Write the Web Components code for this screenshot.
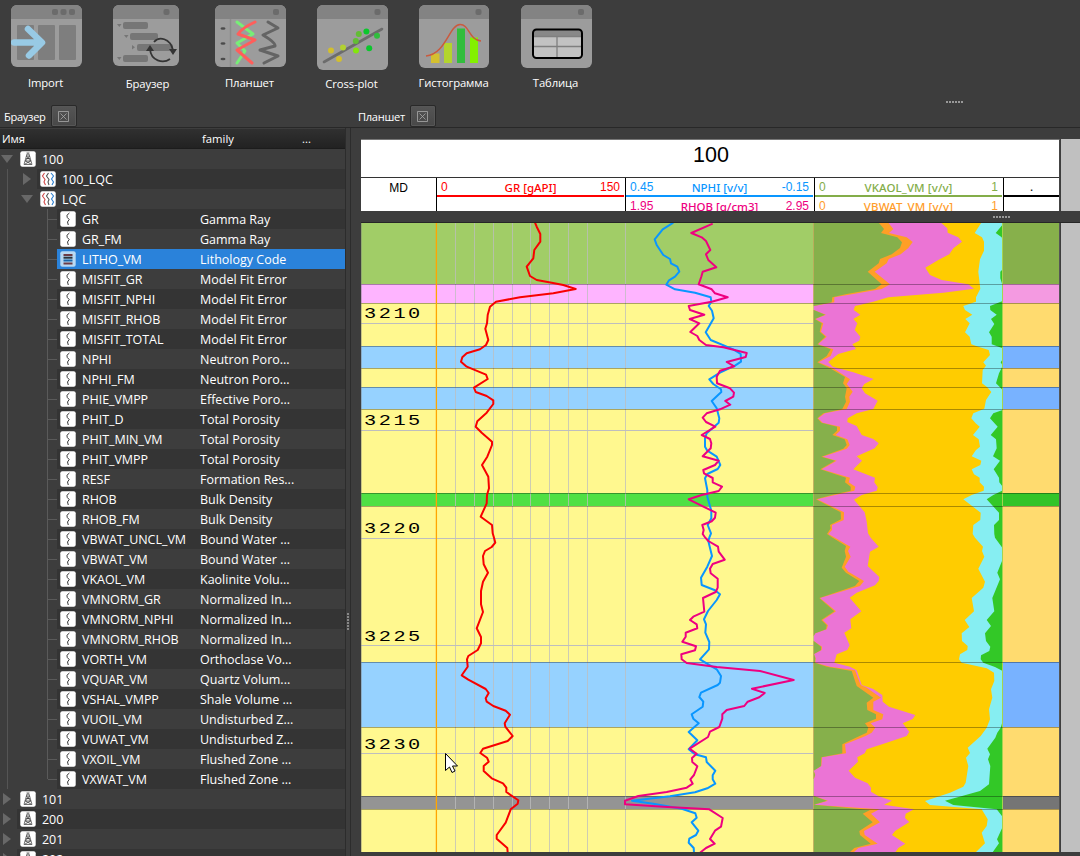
<!DOCTYPE html>
<html lang="ru">
<head>
<meta charset="utf-8">
<title>Планшет</title>
<style>
html,body{margin:0;height:100%;overflow:hidden;background:#3d3d3d}
body{font-family:"Open Sans","Noto Sans",sans-serif;font-size:12px;color:#fff}
</style>
</head>
<body>
<well-app></well-app>
<script>
const define=(name,css,html)=>customElements.define(name,class extends HTMLElement{
  connectedCallback(){
    if(this.shadowRoot)return;
    this.attachShadow({mode:'open'}).innerHTML='<style>'+css+'</style>'+(typeof html==='function'?html(this):html);
  }
});

/* ---------- toolbar ---------- */
const frame=(w,h,dots)=>`<rect width="${w}" height="${h}" rx="6" fill="#9c9c9c"/><path d="M0 14V6a6 6 0 0 1 6-6H${w-6}a6 6 0 0 1 6 6V14z" fill="#838383"/>${dots.map(x=>`<rect x="${x}" y="4" width="6" height="6" rx="2" fill="#6b6b6b"/>`).join('')}`;
const icons={
import:[71,62,frame(71,62,[41,49.5,58])+`<g fill="#7e7e7e"><rect x="6" y="20" width="17" height="35" rx="1"/><rect x="27" y="20" width="17" height="35" rx="1"/><rect x="48" y="20" width="17" height="35" rx="1"/></g><path d="M3 37.5H30M17 24L31 37.5L18 50.500" fill="none" stroke="#98cae5" stroke-width="6.500" stroke-linecap="round" stroke-linejoin="round"/>`],
browser:[66,61,frame(66,61,[50.5])+`<g fill="#767676"><rect x="10" y="17" width="25" height="7" rx="2"/><rect x="17" y="28" width="28" height="7" rx="2"/><rect x="24" y="39" width="36" height="7" rx="2"/><rect x="10" y="50" width="25" height="7" rx="2"/><path d="M4 19h4.500l-2.200 3zM11 30h4.500l-2.200 3zM19 40v4.500l3-2.200zM4 52h4.500l-2.200 3z"/></g><g fill="none" stroke="#343434" stroke-width="1.800"><path d="M41 37C46 31 57 33 60 45M57 54C50 59 38 56 37 44"/></g><path d="M56 44h8l-4 6zM33 46h8l-4-6z" fill="#343434"/>`],
planshet:[71,62,frame(71,62,[58])+`<path d="M15.500 14V62" stroke="#8c8c8c" stroke-width="1.500"/><g fill="#4b4b4b"><ellipse cx="8" cy="23.500" rx="2.500" ry="1.300"/><ellipse cx="8" cy="38.500" rx="2.500" ry="1.300"/><ellipse cx="8" cy="54" rx="2.500" ry="1.300"/></g><g fill="none" stroke-width="3" stroke-linecap="round" stroke-linejoin="round"><path stroke="#77ee77" d="M22 17L38 29L22 38L30 46L22 58"/><path stroke="#ff5e5b" d="M40 17Q27 23 23 29L40 35L22 45L37 58"/><path stroke="#646464" d="M53 17L63 23L48 30Q61 38 60 41L45 45L63 51L49 58"/></g>`],
cross:[71,65,frame(71,65,[57.500])+`<path d="M7 57L65 24" stroke="#6c6c6c" stroke-width="2.600" stroke-linecap="round"/>${[[14,45.500,'#d2bf2e'],[22,54,'#d2bf2e'],[26,42.500,'#b2d130'],[38.800,36,'#62bd35'],[39,45.500,'#83e60c'],[41.800,29,'#62bd35'],[49.400,26.500,'#0bc72c'],[60,30.700,'#31bd3d'],[52.200,43.300,'#0bc72c']].map(d=>`<circle cx="${d[0]}" cy="${d[1]}" r="3" fill="${d[2]}"/>`).join('')}`],
hist:[70,63,frame(70,63,[56.500])+`<rect x="12" y="48.500" width="8.500" height="9.500" fill="#d4c02e"/><rect x="25" y="38" width="8" height="20" fill="#b3d42d"/><rect x="38" y="23.500" width="8" height="34.500" fill="#31bd3d"/><rect x="51" y="32.500" width="8" height="25.500" fill="#83f000"/><path d="M7 51C27 49 30 20 41 19.500C50 19 50 35 62 36" fill="none" stroke="#ca5a3e" stroke-width="1.500"/>`],
table:[71,63,frame(71,63,[57])+`<path d="M12 25h48v6H12z" fill="#888"/><path d="M12 31.500h48V53H12z" fill="#c2c2c2"/><path d="M12 31.500h48M12 41.500h48M36 31.500V53" stroke="#7f7f7f" stroke-width="1.300"/><rect x="12" y="24.500" width="49" height="28.500" rx="3.500" fill="none" stroke="#000" stroke-width="2"/>`]
};
define('tool-button',`:host{display:flex;flex-direction:column;align-items:center;width:102px;height:90px;flex:none}
.i{height:70px;display:flex;align-items:flex-start}svg{display:block}
:host([icon=browser]) svg{margin-right:4px}
:host([icon=browser]) .i,:host([icon=cross]) .i{height:71px}
span{font-size:11.300px;line-height:16px;white-space:nowrap;letter-spacing:-.12px;margin-right:1px}`,
e=>{const [w,h,s]=icons[e.getAttribute('icon')];return `<div class="i"><svg width="${w}" height="${h}" viewBox="0 0 ${w} ${h}">${s}</svg></div><span><slot></slot></span>`});

/* ---------- dock title ---------- */
define('dock-title',`:host{display:flex;align-items:center;height:24px;box-sizing:border-box;gap:5px;font-size:11.100px;letter-spacing:-.3px}
.b{width:24px;height:20px;border:1px solid #292929;border-radius:2px;background:linear-gradient(#555,#484848);box-shadow:inset 0 0 0 1px #575757;display:grid;place-items:center}`,
`<span><slot></slot></span><div class="b"><svg width="11" height="11" viewBox="0 0 11 11" fill="none" stroke="#aaa" stroke-width=".8"><path d="M.5 3V.5H3M8 .5H10.500V3M10.500 8V10.500H8M3 10.500H.5V8M3 .5H8M3 10.500H8M.5 3V8M10.500 3V8" /><path d="M2.500 2.500L8.500 8.500M8.500 2.500L2.500 8.500"/></svg></div>`);

define('grip-dots',`:host{display:block;width:18px;height:2px;background:repeating-linear-gradient(90deg,#999 0 2px,transparent 2px 3px)}
:host([vertical]){width:2px;height:18px;background:repeating-linear-gradient(#888 0 2px,transparent 2px 3px)}`,'');

/* ---------- tree ---------- */
const glyph={
well:`<rect x=".3" y=".3" width="15.400" height="15.400" rx="2" fill="#fff"/><path d="M7 3h2l3 10.500H4zM6.500 5h3M6 7.500h4M5.300 10h5.500M6.500 5L10.500 10M9.500 5L5.500 10M5.300 10L11 13M10.700 10L5 13M6.500 2h3" fill="none" stroke="#333" stroke-width=".7"/>`,
set:`<rect x=".3" y=".3" width="15.400" height="15.400" rx="2" fill="#fff"/><g fill="none" stroke-width="1.100"><path stroke="#d24b4b" d="M4.500 2L2.500 5L5 8.500L4 11L5.500 14"/><path stroke="#555" d="M8.500 2L6.500 5L9 8.500L8 11L9 14"/><path stroke="#2c7fd0" d="M11 2L13.500 5L11.500 8L13.500 11L12 14"/></g>`,
curve:`<rect x=".3" y=".3" width="15.400" height="15.400" rx="2" fill="#fff"/><path d="M9.400 2L6.900 4.300L7.300 6.500L9.200 8.500L7.500 11L8.300 14" fill="none" stroke="#222" stroke-width=".9"/>`,
litho:`<rect x=".3" y=".3" width="15.400" height="15.400" rx="2" fill="#b9d9f2"/><path d="M3.500 3h9v2h-9zM3.500 11.500h9v2h-9z" fill="#6d3c45"/><path d="M3.500 5.700h9v2h-9z" fill="#29333d"/><path d="M3.500 8.500h9v2h-9z" fill="#1966a9"/>`};
define('tree-row',`:host{display:grid;grid-template-columns:var(--ind) 1fr;height:20px;font-size:12.500px;line-height:20px}
.g{display:flex;justify-content:flex-end;align-items:center}
.tick{width:9px;height:1px;background:#5a5a5a}
.r{display:flex;align-items:center;background:var(--bg);height:20px}
.r svg{margin:0 6px 0 3px;flex:none}.n,.f{white-space:nowrap;padding-top:2px}
.n{width:calc(197px - var(--ind) - 22px);letter-spacing:-.03px}
.a{flex:none;margin-right:4px}.c{margin-right:6px}`,
e=>{const lv=+e.getAttribute('level'),k=e.getAttribute('kind'),o=e.getAttribute('state');
e.style.setProperty('--ind',[17,37,57][lv]+'px');
const arrow=o==='open'?'<svg class="a" width="12" height="8"><path d="M0 0H12L6 8z" fill="#686868"/></svg>':o==='closed'?'<svg class="a c" width="8" height="12"><path d="M0 0V12L8 6z" fill="#686868"/></svg>':'<i class="tick"></i>';
return `<div class="g">${arrow}</div><div class="r"><svg width="16" height="16" viewBox="0 0 16 16">${glyph[k]}</svg><span class="n">${e.getAttribute('name')}</span><span class="f"><slot></slot></span></div>`});

const curves=`GR|Gamma Ray
GR_FM|Gamma Ray
LITHO_VM|Lithology Code
MISFIT_GR|Model Fit Error
MISFIT_NPHI|Model Fit Error
MISFIT_RHOB|Model Fit Error
MISFIT_TOTAL|Model Fit Error
NPHI|Neutron Poro...
NPHI_FM|Neutron Poro...
PHIE_VMPP|Effective Poro...
PHIT_D|Total Porosity
PHIT_MIN_VM|Total Porosity
PHIT_VMPP|Total Porosity
RESF|Formation Res...
RHOB|Bulk Density
RHOB_FM|Bulk Density
VBWAT_UNCL_VM|Bound Water ...
VBWAT_VM|Bound Water ...
VKAOL_VM|Kaolinite Volu...
VMNORM_GR|Normalized In...
VMNORM_NPHI|Normalized In...
VMNORM_RHOB|Normalized In...
VORTH_VM|Orthoclase Vo...
VQUAR_VM|Quartz Volum...
VSHAL_VMPP|Shale Volume ...
VUOIL_VM|Undisturbed Z...
VUWAT_VM|Undisturbed Z...
VXOIL_VM|Flushed Zone ...
VXWAT_VM|Flushed Zone ...`.split('\n').map(l=>l.split('|'));
const rows=[[0,'well','open','100',''],[1,'set','closed','100_LQC',''],[1,'set','open','LQC',''],
...curves.map(([n,f])=>[2,n==='LITHO_VM'?'litho':'curve','',n,f]),
[0,'well','closed','101',''],[0,'well','closed','200',''],[0,'well','closed','201',''],[0,'well','closed','202','']];
define('data-tree',`:host{display:flex;flex-direction:column;flex:1;min-height:0;overflow:hidden}
.h{height:19px;flex:none;display:grid;grid-template-columns:200px 100px 1fr;background:linear-gradient(#303030,#222);border-bottom:1px solid #1c1c1c;font-size:11.300px;line-height:19px}
.h span{padding-left:2px}
.b{flex:1;min-height:0;overflow:hidden;
background:linear-gradient(#555,#555) 7px 20px/1px 620px no-repeat,linear-gradient(#5a5a5a,#5a5a5a) 47px 60px/1px 570px no-repeat}`,
()=>`<div class="h"><span>Имя</span><span>family</span><span>...</span></div><div class="b">${rows.map((r,i)=>`<tree-row level="${r[0]}" kind="${r[1]}" state="${r[2]}" name="${r[3]}" style="--bg:${r[3]==='LITHO_VM'?'#2a82da':i%2?'#343434':'#3d3d3d'}">${r[4]}</tree-row>`).join('')}</div>`);

/* ---------- track header ---------- */
define('curve-scale',`:host{display:grid;grid-template-columns:1fr auto 1fr;height:17px;border-bottom:2px solid var(--c);color:var(--c);font:12px/19px "Liberation Sans",sans-serif;padding:0 4px;margin:0 1px 0 0}
b{font:500 11.500px/20px "Noto Sans","Open Sans",sans-serif;letter-spacing:var(--ls,0);white-space:nowrap}
span:last-child{text-align:right}`,
e=>`<span>${e.getAttribute('min')}</span><b><slot></slot></b><span>${e.getAttribute('max')}</span>`);
define('track-header',`:host{display:flex;flex-direction:column;height:71px;width:698px;background:#fff;color:#000;overflow:hidden;border-top:1px solid #777;border-right:1px solid #444}
.t{height:37px;line-height:31px;text-align:center;font-family:"Liberation Sans",sans-serif;font-size:21.500px;flex:none;border-bottom:1px solid #333;text-indent:2px}
.g{display:grid;grid-template-columns:75px 189px 189px 189px 1fr;height:33px}
.g>div+div{border-left:1px solid #000}
.g>div{height:33px;overflow:hidden}
.md{text-align:center;font:12px/20px "Liberation Sans",sans-serif}
.x{border-bottom:2px solid #000;height:17px;line-height:17px;text-align:center;font-size:12px}`,
`<div class="t">100</div><div class="g"><div class="md">MD</div>
<div><curve-scale min="0" max="150" style="--c:#f00">GR [gAPI]</curve-scale></div>
<div><curve-scale min="0.45" max="-0.15" style="--c:#0996ff">NPHI [v/v]</curve-scale><curve-scale min="1.95" max="2.95" style="--c:#ee0080">RHOB [g/cm3]</curve-scale></div>
<div><curve-scale min="0" max="1" style="--c:#83ad49;--ls:.1px">VKAOL_VM [v/v]</curve-scale><curve-scale min="0" max="1" style="--c:#ff9d2b;--ls:.1px">VBWAT_VM [v/v]</curve-scale></div>
<div><div class="x">.</div></div></div>`);

/* ---------- log plot: samples are in thirds of a pixel, upper and lower depth window ---------- */
const P=(ox,top,bot)=>{
  const rd=(s,oy)=>s.trim().split(/\s+/).map(p=>p.split(',').map(Number)).map(([x,y])=>[ox+x/3,oy+y/3]);
  return rd(top,220).concat(rd(bot,536)).map(p=>p.map(v=>v.toFixed(1)).join(' ')).join('L');
};
const gr=P(360,`525,8 530,20 541,42 541,65 523,90 520,115 500,140 510,168 530,180 575,188 610,195 647,207 580,220 480,232 408,245 390,260 383,285 381,310 376,326 385,360 378,375 360,388 320,400 307,412 303,425 320,440 378,464 383,477 342,503 347,516 380,528 400,541 400,552 380,578 352,604 347,620 365,638 396,665 396,675 382,710 366,735 385,770 387,805 381,825 380,850 362,890 396,915 398,940`,
`402,5 406,20 395,33 375,45 369,60 371,85 384,110 369,137 363,165 363,205 369,228 350,277 363,303 363,322 353,342 325,360 321,370 323,392 305,418 325,431 377,459 386,471 377,487 380,497 400,510 437,524 450,536 434,562 436,572 458,600 443,615 369,638 361,651 381,665 386,677 371,690 371,705 395,727 429,742 439,755 439,768 475,793 473,803 452,820 437,860 410,897 410,908 442,936 443,950`);
const nphi=P(620,`160,8 128,28 104,58 110,75 130,105 150,117 153,130 172,140 178,155 165,170 147,181 139,194 165,208 225,218 272,232 274,245 266,258 276,272 281,295 268,318 257,337 272,360 340,388 362,402 363,425 345,437 300,458 268,478 280,492 303,508 304,516 275,543 290,565 298,595 296,608 260,640 255,655 255,680 262,692 290,710 301,735 293,747 262,762 255,775 262,810 262,830 274,872 274,895 263,915 273,940`,
`268,5 265,15 276,60 262,92 243,125 245,147 285,163 300,175 290,192 264,225 252,250 258,265 256,290 268,318 267,340 240,370 265,385 290,400 303,420 300,440 293,447 243,470 238,483 250,497 248,512 215,535 220,548 236,562 206,588 232,613 206,640 225,655 258,664 260,678 286,704 278,718 278,730 286,743 262,757 225,769 150,781 36,794 100,803 185,818 226,832 230,845 215,859 235,884 228,897 208,908 206,920 221,936 222,950`);
const rhob=P(620,`278,11 214,39 245,52 258,63 271,90 258,103 265,120 289,142 248,155 244,170 236,193 275,208 285,220 323,232 275,245 206,258 210,270 253,284 209,297 238,310 211,336 232,348 238,360 258,375 310,382 380,399 377,411 320,426 343,439 300,452 290,470 291,490 330,505 342,518 340,530 316,543 331,554 300,568 260,580 248,593 258,606 286,620 245,645 270,657 274,670 272,685 248,709 296,722 285,735 250,750 252,760 278,774 278,787 306,800 296,813 245,825 206,838 287,878 285,893 275,904 247,915 251,930 248,942`,
`256,5 265,15 294,32 296,47 314,71 278,84 270,98 272,112 293,128 293,155 287,168 249,186 253,227 220,242 210,252 230,265 232,277 197,290 197,302 187,317 228,331 225,343 184,355 185,370 200,381 290,393 420,405 521,432 396,458 434,471 418,484 383,497 373,510 320,522 307,535 307,548 298,573 270,587 264,603 209,638 230,653 216,666 217,678 232,691 222,717 211,730 218,743 200,755 140,768 55,780 15,794 15,805 130,812 268,820 308,846 303,872 285,884 270,909 284,923 258,936 240,950`);
const layers=[
['#33c827',`578,8`,`578,950`],
['#86eef2',`578,8 577,15 557,39 575,52 578,65 578,148 571,155 571,175 578,197 578,243 540,258 541,270 560,284 543,297 553,312 537,337 545,350 545,373 578,385 578,418 572,427 578,437 567,460 558,490 578,510 578,570 550,580 540,595 563,620 542,645 558,658 560,685 549,709 570,722 551,748 567,773 568,787 578,800 576,812 550,825 530,838 567,878 567,900 552,915 553,942`,
`555,5 577,35 578,70 562,110 570,130 547,186 553,226 530,252 543,270 525,292 528,315 541,332 538,345 513,358 512,370 520,380 555,393 578,405 578,555 572,575 562,590 556,605 532,638 540,655 534,670 541,690 537,745 510,765 405,794 430,807 560,820 578,843 578,872 561,910 567,922 547,950`],
['#ffcc00',`514,8 494,39 516,52 522,65 522,92 510,118 505,155 511,206 498,232 498,245 460,258 465,270 487,284 466,297 479,310 465,337 479,350 484,373 505,380 536,390 540,405 520,427 528,437 518,450 516,490 532,502 544,516 528,540 523,566 490,580 484,595 497,610 509,620 489,645 506,658 510,680 498,690 485,709 514,722 511,735 485,748 492,763 509,773 509,787 522,800 521,812 485,825 460,838 512,878 511,900 490,915 488,942`,
`495,5 519,32 516,45 523,62 505,98 525,137 520,155 485,186 492,226 464,252 478,273 455,292 456,315 473,330 472,342 450,355 447,370 455,380 530,397 552,410 553,435 543,460 547,485 537,520 540,550 530,575 512,600 473,635 480,651 468,665 475,690 467,740 460,752 420,770 345,795 360,807 515,820 533,850 530,870 515,890 525,922 496,950`],
['#eb74d5',`393,8 412,25 413,38 445,52 456,65 430,85 418,103 385,120 346,143 360,165 395,180 475,193 492,206 400,218 235,232 190,245 135,258 131,270 151,284 130,297 142,310 134,330 151,350 148,362 127,373 138,387 85,402 55,426 68,440 130,457 191,477 163,492 155,505 165,520 203,542 190,567 140,580 113,595 112,606 140,618 155,645 190,657 206,670 194,685 140,709 156,722 130,748 195,773 193,787 203,801 200,812 155,825 132,839 164,877 170,905 174,940`,
`182,5 206,32 180,47 173,90 208,123 206,135 195,148 140,170 119,185 154,226 121,250 124,277 103,290 119,328 112,342 80,355 73,380 120,392 140,403 155,447 190,459 217,477 218,497 237,512 316,537 308,549 278,562 298,587 290,600 230,620 170,640 164,652 142,664 144,677 116,704 135,725 173,742 183,755 183,767 205,780 246,794 222,806 312,820 287,833 285,846 298,858 255,885 246,897 286,923 265,936 255,950`],
['#ff9f26',`235,8 250,27 237,39 290,52 308,66 295,84 272,103 236,117 230,130 194,155 240,193 215,207 130,222 73,232 73,247 11,258 11,270 48,284 16,297 40,310 33,335 50,350 24,373 70,388 62,408 26,427 70,445 120,478 110,492 128,515 118,530 120,545 110,567 45,580 24,595 38,608 90,620 90,632 77,645 112,658 119,675 110,686 38,710 80,722 35,748 120,773 116,787 136,800 133,812 75,825 22,838 102,877 101,900 66,915 66,930 55,942`,
`75,5 121,32 114,45 122,62 104,92 115,107 162,135 150,150 30,186 78,226 38,252 54,268 50,280 16,292 11,300 11,315 36,332 35,342 12,354 17,367 16,380 60,392 135,403 152,447 170,455 213,485 190,497 190,522 220,535 217,550 182,562 196,575 185,590 165,601 105,625 108,652 36,664 34,690 11,704 16,717 11,730 11,780 54,794 11,806 208,820 183,833 210,859 162,885 164,897 203,923 145,936 130,950`],
['#86b04b',`206,8 222,27 213,39 262,52 276,67 270,84 245,103 210,117 206,130 173,155 215,193 195,207 110,222 67,232 65,247 11,258 11,270 45,284 14,297 35,310 29,335 46,350 22,373 62,388 50,408 22,427 60,445 105,471 99,490 110,505 105,530 108,545 97,567 40,580 22,595 34,608 81,620 81,632 67,645 104,658 110,675 100,686 34,710 75,722 31,748 108,773 105,787 122,800 122,812 65,825 18,838 92,877 93,898 60,915 62,925 51,942`,
`68,5 108,30 104,45 108,62 95,95 108,110 148,135 135,150 28,186 73,226 34,252 50,268 48,280 16,292 11,300 11,315 33,332 33,342 12,354 16,367 14,380 50,392 125,405 140,450 190,485 170,500 172,522 198,535 198,548 165,562 175,575 170,590 147,601 97,625 97,652 34,664 33,690 11,704 15,717 11,730 11,780 50,794 11,806 180,822 158,833 188,859 148,885 150,897 182,923 133,936 118,950`]];
const G=['#a1cd67','#87b04b'],K=['#feb4ff','#f49ae1'],Y=['#fff88f','#ffdb6f'],B=['#96d2ff','#78b2ff'],E=['#4fe044','#32c429'],S=['#949494','#757575'];
const bands=[[223,G],[284,K],[303,Y],[346,B],[368,Y],[387,B],[409,Y],[493,E],[506,Y],[662,B],[727,Y],[796,S],[809,Y],[852]];
define('log-plot',`:host{display:block;width:699px;height:629px}svg{display:block}text{font-family:"Liberation Mono",monospace;font-size:14.500px}`,
()=>{
let s='';
for(let i=0;i<bands.length-1;i++){const [y,c]=bands[i],h=bands[i+1][0]-y;s+=`<rect x="361" y="${y}" width="453" height="${h}" fill="${c[0]}"/><rect x="1002" y="${y}" width="58" height="${h}" fill="${c[1]}"/>`}
s+='<g stroke="#bebebe" shape-rendering="crispEdges">'+[323,430,538,645,753].map(y=>`<path d="M361 ${y}.5H814"/>`).join('')+'<g opacity=".75">'+[455,474,493,512,530,549,568,587,625].map(x=>`<path d="M${x}.5 223V852"/>`).join('')+'</g></g>';
layers.forEach(([c,t,b])=>s+=`<path fill="${c}" d="M813.700 222L${P(810,t,b)}L813.700 853z"/>`);
s+='<path d="M1002.500 223V852" stroke="#a5d44f"/>';
s+=bands.slice(1,-1).map(([y])=>`<path d="M361 ${y}.5H1060" stroke="#000" stroke-opacity=".33"/>`).join('');
s+='<path d="M436.400 223V852" stroke="#ffa500" stroke-width="1.300"/>';
s+=`<g fill="none" stroke-width="2" stroke-linejoin="round"><path d="M${gr}" stroke="#f80000"/><path d="M${nphi}" stroke="#0996ff"/><path d="M${rhob}" stroke="#ee0080"/></g>`;
s+=[[3210,318],[3215,425],[3220,533],[3225,641],[3230,749]].map(([n,y])=>`<text transform="translate(364 ${y}) scale(1.4 1)" letter-spacing="1.800">${n}</text>`).join('');
s+='<path d="M1059.500 223V852" stroke="#555"/><path d="M361.500 223V852" stroke="#777" stroke-opacity=".4"/>';
s+='<path d="M445.500 753.500V770.500L449.500 767L452 772.500L455 771L452.500 766H457.500z" fill="#fff" stroke="#000" stroke-width="1"/>';
return `<svg width="699" height="629" viewBox="361 223 699 629">${s}</svg>`});

/* ---------- application ---------- */
define('well-app',`:host{display:grid;grid-template-rows:104px 24px 1fr;height:856px;width:1080px;overflow:hidden;background:#3d3d3d}
.tools{display:flex;padding:5px 0 0;margin-left:-5px;position:relative}
.tools grip-dots{position:absolute;left:951px;top:101px}
.docks,.main{display:grid;grid-template-columns:345px 6px 1fr}
.docks{border-bottom:1px solid #282828;box-sizing:border-box}
.docks dock-title:first-child{padding-left:4px}
.docks dock-title:last-child{padding-left:7px}
.main{min-height:0}
.left{display:flex;flex-direction:column;min-height:0;padding-top:1px}
.split{display:grid;place-items:center;border-left:1px solid #2c2c2c;border-right:1px solid #2c2c2c;box-sizing:border-box;padding-top:260px;align-content:center}
.right{display:grid;grid-template-columns:699px 1fr;grid-template-rows:72px 12px 629px;padding:11px 0 0 10px;column-gap:1px}
.gap{grid-column:1/3;padding:5px 0 0 632px;border-bottom:1px solid #262626;box-sizing:border-box}
.v{background:#c0c0c0}`,
`<div class="tools"><tool-button icon="import">Import</tool-button><tool-button icon="browser">Браузер</tool-button><tool-button icon="planshet">Планшет</tool-button><tool-button icon="cross">Cross-plot</tool-button><tool-button icon="hist">Гистограмма</tool-button><tool-button icon="table">Таблица</tool-button><grip-dots></grip-dots></div>
<div class="docks"><dock-title>Браузер</dock-title><i></i><dock-title>Планшет</dock-title></div>
<div class="main"><div class="left"><data-tree></data-tree></div><div class="split"><grip-dots vertical></grip-dots></div>
<div class="right"><track-header></track-header><div class="v"></div><div class="gap"><grip-dots></grip-dots></div><log-plot></log-plot><div class="v"></div></div></div>`);
</script>
</body>
</html>
